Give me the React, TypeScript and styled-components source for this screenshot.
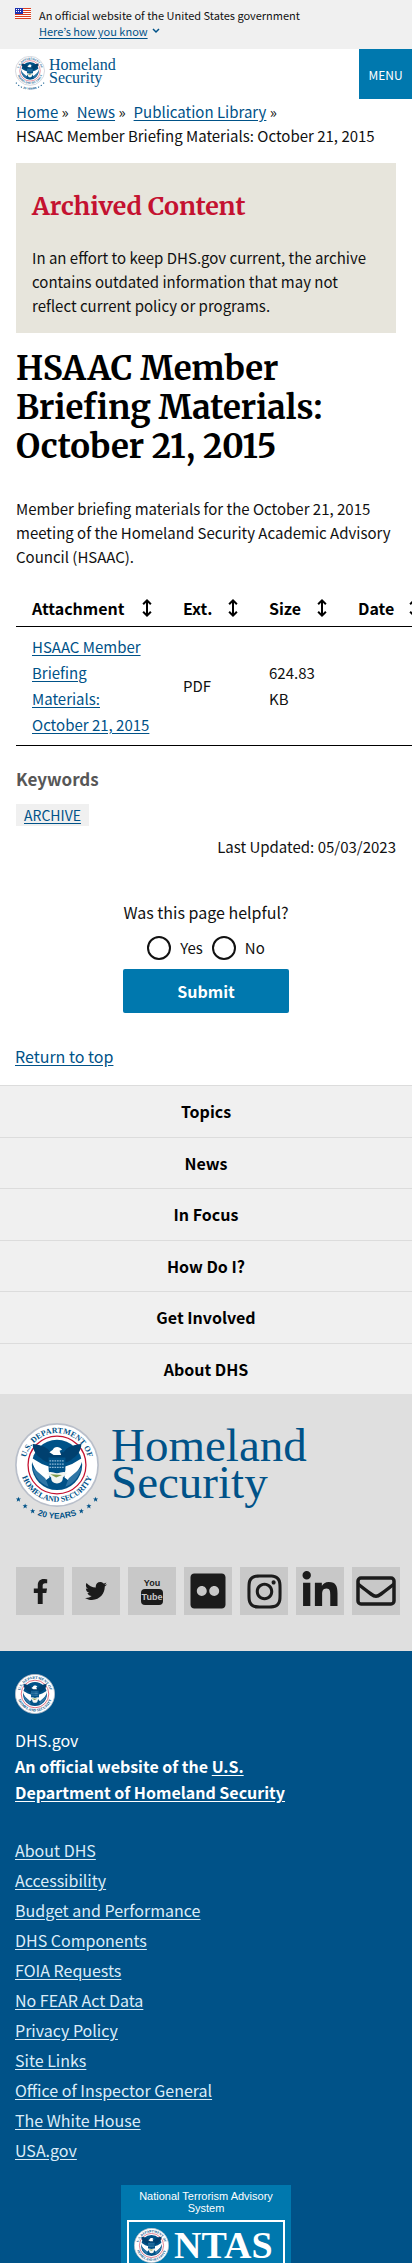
import React from "react";
import styled, { createGlobalStyle } from "styled-components";
import { FaFacebookF, FaTwitter, FaFlickr, FaInstagram, FaLinkedinIn } from "react-icons/fa";

const sans = `"Source Sans Pro", "Noto Sans CJK KR", "Noto Sans", sans-serif`;
const serif = `"Merriweather", "DejaVu Serif Condensed", "DejaVu Serif", serif`;
const logoSerif = `"Liberation Serif", serif`;

const GlobalStyle = createGlobalStyle`
  *, *::before, *::after { box-sizing: border-box; }
  body {
    margin: 0;
    background: #fff;
    color: #111;
    font-family: ${sans};
    font-size: 15px;
    line-height: 24px;
    overflow-x: hidden;
  }
  h1, h2, h3, p, ul, ol, fieldset { margin: 0; padding: 0; border: 0; }
  ul, ol { list-style: none; }
  svg { display: block; flex: none; }
`;

const Link = styled.a`
  color: #005288;
  text-decoration: underline;
  text-underline-offset: 2px;
`;

/* Government banner */
const Banner = styled.section`
  display: flex;
  gap: 8px;
  padding: 7px 15px 10px;
  background: #f0f0f0;
  font-size: 11px;
  line-height: 16px;
`;
const Flag = styled.svg`
  margin-top: 1px;
`;
const BannerButton = styled.button`
  display: flex;
  align-items: center;
  gap: 4px;
  padding: 0;
  border: 0;
  background: none;
  color: #005288;
  font: inherit;
  text-underline-offset: 2px;
  span { text-decoration: underline; }
`;

/* Header */
const Header = styled.header`
  display: flex;
  justify-content: space-between;
  height: 50px;
`;
const Brand = styled.a<{ $large?: boolean }>`
  display: flex;
  align-items: flex-start;
  gap: ${(p) => (p.$large ? 12 : 4)}px;
  padding: ${(p) => (p.$large ? "29px 15px 0" : "7px 0 0 15px")};
  color: #005288;
  font-family: ${logoSerif};
  font-size: ${(p) => (p.$large ? 47 : 16)}px;
  line-height: ${(p) => (p.$large ? 37 : 13)}px;
  text-decoration: none;
`;
const BrandName = styled.span<{ $large?: boolean }>`
  padding-top: ${(p) => (p.$large ? 4 : 2)}px;
`;
const MenuButton = styled.button`
  width: 53px;
  border: 0;
  padding: 0;
  background: #0078ae;
  color: #fff;
  font-family: ${sans};
  font-size: 12px;
`;

/* Main column */
const Main = styled.main`
  padding: 0 16px;
`;
const Crumbs = styled.ol`
  display: flex;
  flex-wrap: wrap;
  column-gap: 8px;
  padding-top: 1px;
`;
const Notice = styled.section`
  margin-top: 15px;
  padding: 24px 16px 15px;
  background: #e7e5dc;
`;
const NoticeTitle = styled.h2`
  margin-bottom: 21px;
  color: #c41230;
  font-family: ${serif};
  font-size: 25px;
  line-height: 38px;
`;
const Title = styled.h1`
  margin-top: 16px;
  color: #000;
  font-family: ${serif};
  font-size: 33px;
  line-height: 39px;
`;
const Summary = styled.p`
  margin-top: 31px;
`;

/* Attachments */
const TableScroll = styled.div`
  margin: 18px -16px 0 0;
  overflow-x: auto;
  scrollbar-width: none;
`;
const Table = styled.table`
  width: 418px;
  table-layout: fixed;
  border-collapse: collapse;
  line-height: 26px;
`;
const HeadCell = styled.th<{ $width: number }>`
  width: ${(p) => p.$width}px;
  padding: 8px 8px 5px 16px;
  border-bottom: 1px solid #000;
  color: #000;
  font-size: 16px;
  text-align: left;
`;
const HeadInner = styled.div`
  display: flex;
  justify-content: space-between;
  align-items: center;
`;
const SortButton = styled.button`
  padding: 0;
  border: 0;
  background: none;
`;
const Cell = styled.td`
  padding: 7px 10px 7px 16px;
  border-bottom: 1px solid #000;
`;

const Keywords = styled.h3`
  margin-top: 20px;
  color: #575757;
  font-size: 17px;
  line-height: 26px;
`;
const Tag = styled(Link)`
  display: inline-block;
  margin-top: 12px;
  padding: 0 8px;
  background: #f0f0f0;
  font-size: 14px;
  line-height: 22px;
  vertical-align: top;
`;
const Updated = styled.p`
  margin-top: 9px;
  text-align: right;
`;

/* Feedback */
const Feedback = styled.form`
  display: flex;
  flex-direction: column;
  align-items: center;
  margin-top: 41px;
`;
const Options = styled.fieldset`
  legend {
    margin: 0 auto;
    padding: 0 0 12px;
    font-size: 16px;
  }
`;
const OptionRow = styled.div`
  display: flex;
  justify-content: center;
  gap: 9px;
`;
const Option = styled.label`
  display: flex;
  align-items: center;
  gap: 9px;
`;
const Radio = styled.input`
  appearance: none;
  width: 24px;
  height: 24px;
  margin: 0;
  border: 2px solid #111;
  border-radius: 50%;
  background: #fff;
  &:checked { box-shadow: inset 0 0 0 4px #fff; background: #0078ae; }
`;
const Submit = styled.button`
  width: 166px;
  height: 44px;
  margin-top: 9px;
  border: 0;
  border-radius: 2px;
  background: #0078ae;
  color: #fff;
  font-family: ${sans};
  font-size: 16px;
  font-weight: 700;
`;
const ReturnTop = styled.div`
  padding: 31px 15px 17px;
  font-size: 16px;
`;

/* Footer */
const FooterNav = styled.nav`
  ul {
    display: grid;
    grid-auto-rows: 1fr;
    min-height: 309px;
  }
`;
const NavItem = styled.li`
  display: grid;
  border-top: 1px solid #dcdcdc;
  background: #f0f0f0;
`;
const NavLink = styled.a`
  display: grid;
  place-items: center;
  color: #000;
  font-size: 16px;
  font-weight: 700;
  text-decoration: none;
`;
const AgencyBand = styled.section`
  padding-bottom: 36px;
  background: #dfdfdf;
`;
const SocialList = styled.ul`
  display: flex;
  gap: 8px;
  padding: 45px 12px 0 16px;
`;
const SocialLink = styled.a`
  display: grid;
  place-items: center;
  width: 48px;
  height: 48px;
  background: #c8c8c8;
  color: #1b1b1b;
`;
const Identifier = styled.footer`
  padding: 23px 15px 0;
  background: #005288;
  color: #fff;
  font-size: 16px;
`;
const IdentityHead = styled.div`
  max-width: 290px;
  padding-top: 13px;
  line-height: 26px;
`;
const Statement = styled.p`
  font-weight: 700;
  a { color: inherit; text-underline-offset: 2px; }
`;
const RequiredLinks = styled.ul`
  padding: 30px 0 20px;
  line-height: 30px;
  a { color: #dcecf8; text-underline-offset: 2px; }
`;
const Advisory = styled.section`
  width: 170px;
  margin: 0 auto;
  padding: 5px 6px 0;
  background: #0078ae;
  font: 11px/12px "Liberation Sans", sans-serif;
  text-align: center;
`;
const AdvisoryFrame = styled.div`
  display: flex;
  gap: 5px;
  margin-top: 6px;
  padding: 6px 5px 0;
  border: 2px solid #fff;
  border-bottom: 0;
  font: 700 38px/35px ${logoSerif};
`;

function Eagle() {
  return (
    <g>
      <circle cx="50" cy="50" r="30" fill="#005288" />
      <path d="M21 25c9 1 14 3 18 6l3 4h16l3-4c4-3 9-5 18-6 0 8-5 14-10 17-5 5-10 6-19 6s-14-1-19-6c-5-3-10-9-10-17z" fill="#00406f" />
      <path d="M19 41l13 8 9 3v13l-4 3C28 62 21 53 19 41zM81 41l-13 8-9 3v13l4 3c9-6 16-15 18-27z" fill="#fff" />
      <path d="M21 53l15 13 4 10c-9-3-17-12-19-23zM79 53L64 66l-4 10c9-3 17-12 19-23z" fill="#2f76a6" />
      <path d="M45 32c1-4 8-5 11 0l-3 1 2 5h-9l-5-3z" fill="#fff" />
      <path d="M40 41h20v14c0 6-4 9-10 12-6-3-10-6-10-12z" fill="#005288" />
      <path d="M41 45h18M41 49h18M41 53h18" stroke="#8db8d6" strokeWidth="1.5" strokeDasharray="2 1" />
      <path d="M38 60c4-3 7-1 12 0 5-1 8-3 12 0l-5 5c0 5-3 7-7 7s-7-2-7-7z" fill="#f3f5f2" />
      <path d="M42 61l14 1-7 3z" fill="#7e9b4b" />
    </g>
  );
}

function Seal({ size, id, anniversary }: { size: number; id: string; anniversary?: boolean }) {
  return (
    <svg
      width={size}
      height={anniversary ? Math.round(size * 1.18) : size}
      viewBox={anniversary ? "0 0 100 118" : "0 0 100 100"}
      role="img"
      aria-label="U.S. Department of Homeland Security seal"
    >
      <defs>
        <path id={`${id}-top`} d="M12 50a38 38 0 0 1 76 0" />
        <path id={`${id}-low`} d="M6 50a44 44 0 0 0 88 0" />
        <path id={`${id}-years`} d="M-14 50a64 64 0 0 0 128 0" />
      </defs>
      <circle cx="50" cy="50" r="49" fill="#fff" stroke="#b9bfca" strokeWidth="2" />
      <circle cx="50" cy="50" r="34.5" fill="none" stroke="#c41230" strokeWidth="1.5" />
      <Eagle />
      <g fill="#005288" fontFamily="Liberation Serif, serif" fontSize="9.5" fontWeight="700" textAnchor="middle">
        <text><textPath href={`#${id}-top`} startOffset="50%">U.S. DEPARTMENT OF</textPath></text>
        <text><textPath href={`#${id}-low`} startOffset="50%">HOMELAND SECURITY</textPath></text>
      </g>
      {anniversary && (
        <g fill="#005288" fontFamily="Liberation Sans, sans-serif" fontSize="10" fontWeight="700" textAnchor="middle">
          <text><textPath href={`#${id}-years`} startOffset="50%">20 YEARS</textPath></text>
          {[[4, 91], [12, 99], [21, 105], [79, 105], [88, 99], [96, 91]].map(([x, y]) => (
            <path key={x} transform={`translate(${x} ${y})`} d="M0-3l.8 2H3L1.3.4 2 3 0 1.500-2 3-1.300.400-3-1h2.200z" />
          ))}
        </g>
      )}
    </svg>
  );
}

function SortIcon() {
  return (
    <svg width="24" height="24" viewBox="0 0 24 24" fill="#000" aria-hidden="true">
      <polygon points="15.17 15 13 17.17 13 6.83 15.17 9 16.58 7.59 12 3 7.41 7.59 8.83 9 11 6.83 11 17.17 8.83 15 7.42 16.41 12 21 16.59 16.41 15.17 15" />
    </svg>
  );
}

function YouTubeIcon() {
  return (
    <svg width="24" height="30" viewBox="0 0 24 30" aria-hidden="true">
      <rect x="1" y="13" width="22" height="16" rx="4" fill="#1b1b1b" />
      <g fontFamily="Liberation Sans Narrow, Liberation Sans, sans-serif" fontWeight="700" textAnchor="middle">
        <text x="12" y="10" fontSize="9" fill="#1b1b1b">You</text>
        <text x="12" y="24" fontSize="9" fill="#c8c8c8">Tube</text>
      </g>
    </svg>
  );
}

function MailIcon() {
  return (
    <svg width="40" height="30" viewBox="0 0 40 30" fill="none" stroke="#1b1b1b" strokeWidth="3.5" aria-hidden="true">
      <rect x="2" y="2" width="36" height="26" rx="3" />
      <path d="M2 8c5 4 9 7 13 10 4 3 6 3 10 0 4-3 8-6 13-10" />
    </svg>
  );
}

const social = [
  { name: "Facebook", icon: <FaFacebookF size={25} /> },
  { name: "Twitter", icon: <FaTwitter size={22} /> },
  { name: "YouTube", icon: <YouTubeIcon /> },
  { name: "Flickr", icon: <FaFlickr size={40} /> },
  { name: "Instagram", icon: <FaInstagram size={39} /> },
  { name: "LinkedIn", icon: <FaLinkedinIn size={40} /> },
  { name: "Email", icon: <MailIcon /> },
];

const columns = [
  { label: "Attachment", width: 151 },
  { label: "Ext.", width: 86 },
  { label: "Size", width: 89 },
  { label: "Date", width: 92 },
];

const sections = ["Topics", "News", "In Focus", "How Do I?", "Get Involved", "About DHS"];

const required = [
  "About DHS",
  "Accessibility",
  "Budget and Performance",
  "DHS Components",
  "FOIA Requests",
  "No FEAR Act Data",
  "Privacy Policy",
  "Site Links",
  "Office of Inspector General",
  "The White House",
  "USA.gov",
];

export default function App() {
  return (
    <>
      <GlobalStyle />
      <Banner aria-label="Official government website">
        <Flag width="16" height="11" viewBox="0 0 16 11" aria-hidden="true">
          <rect width="16" height="11" fill="#fff" />
          <path d="M0 .5h16M0 2.500h16M0 4.500h16M0 6.500h16M0 8.500h16M0 10.500h16" stroke="#db3e1f" />
          <rect width="8" height="6" fill="#1e33b1" />
          <path d="M1 1.500h6M1 3.500h6" stroke="#fff" strokeDasharray="1 1" />
        </Flag>
        <div>
          <div>An official website of the United States government</div>
          <BannerButton type="button">
            <span>Here’s how you know</span>
            <svg width="8" height="6" viewBox="0 0 8 6" fill="none" stroke="#005288" strokeWidth="1.5" aria-hidden="true">
              <path d="M1 1l3 3 3-3" />
            </svg>
          </BannerButton>
        </div>
      </Banner>

      <Header>
        <Brand href="#">
          <Seal size={30} id="head" anniversary />
          <BrandName>Homeland<br />Security</BrandName>
        </Brand>
        <MenuButton type="button">MENU</MenuButton>
      </Header>

      <Main>
        <nav aria-label="Breadcrumb">
          <Crumbs>
            <li><Link href="#">Home</Link> »</li>
            <li><Link href="#">News</Link> »</li>
            <li><Link href="#">Publication Library</Link> »</li>
            <li>HSAAC Member Briefing Materials: October 21, 2015</li>
          </Crumbs>
        </nav>

        <Notice>
          <NoticeTitle>Archived Content</NoticeTitle>
          <p>
            In an effort to keep DHS.gov current, the archive contains outdated information that may not reflect
            current policy or programs.
          </p>
        </Notice>

        <Title>HSAAC Member Briefing Materials: October 21, 2015</Title>
        <Summary>
          Member briefing materials for the October 21, 2015 meeting of the Homeland Security Academic Advisory
          Council (HSAAC).
        </Summary>

        <TableScroll>
          <Table>
            <thead>
              <tr>
                {columns.map((c) => (
                  <HeadCell key={c.label} $width={c.width} scope="col">
                    <HeadInner>
                      {c.label}
                      <SortButton type="button" aria-label={`Sort by ${c.label}`}><SortIcon /></SortButton>
                    </HeadInner>
                  </HeadCell>
                ))}
              </tr>
            </thead>
            <tbody>
              <tr>
                <Cell><Link href="#">HSAAC Member Briefing Materials: October 21, 2015</Link></Cell>
                <Cell>PDF</Cell>
                <Cell>624.83 KB</Cell>
                <Cell />
              </tr>
            </tbody>
          </Table>
        </TableScroll>

        <Keywords>Keywords</Keywords>
        <Tag href="#">ARCHIVE</Tag>
        <Updated>Last Updated: 05/03/2023</Updated>

        <Feedback>
          <Options>
            <legend>Was this page helpful?</legend>
            <OptionRow>
              <Option><Radio type="radio" name="helpful" value="yes" />Yes</Option>
              <Option><Radio type="radio" name="helpful" value="no" />No</Option>
            </OptionRow>
          </Options>
          <Submit type="submit">Submit</Submit>
        </Feedback>
      </Main>

      <ReturnTop><Link href="#">Return to top</Link></ReturnTop>

      <FooterNav aria-label="Footer">
        <ul>
          {sections.map((s) => (
            <NavItem key={s}><NavLink href="#">{s}</NavLink></NavItem>
          ))}
        </ul>
      </FooterNav>

      <AgencyBand>
        <Brand href="#" $large>
          <Seal size={84} id="band" anniversary />
          <BrandName $large>Homeland<br />Security</BrandName>
        </Brand>
        <SocialList>
          {social.map((s) => (
            <li key={s.name}><SocialLink href="#" aria-label={s.name}>{s.icon}</SocialLink></li>
          ))}
        </SocialList>
      </AgencyBand>

      <Identifier>
        <Seal size={40} id="ident" />
        <IdentityHead>
          <p>DHS.gov</p>
          <Statement>
            An official website of the <a href="#">U.S. Department of Homeland Security</a>
          </Statement>
        </IdentityHead>
        <RequiredLinks>
          {required.map((r) => (
            <li key={r}><a href="#">{r}</a></li>
          ))}
        </RequiredLinks>
        <Advisory>
          <p>National Terrorism Advisory System</p>
          <AdvisoryFrame>
            <Seal size={35} id="ntas" />
            NTAS
          </AdvisoryFrame>
        </Advisory>
      </Identifier>
    </>
  );
}
